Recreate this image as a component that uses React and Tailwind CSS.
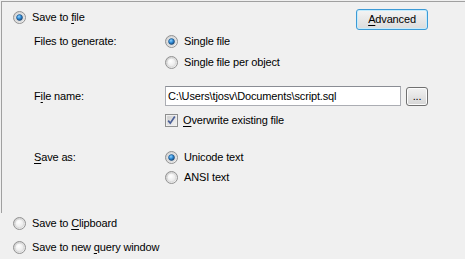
import React from "react";

function Radio({ checked }) {
  return (
    <svg width="13" height="13" viewBox="0 0 13 13" className="shrink-0 block">
      <defs>
        <linearGradient id="rOuter" x1="0" y1="0" x2="1" y2="1">
          <stop offset="0" stopColor="#c9c9c9" />
          <stop offset="1" stopColor="#f7f7f7" />
        </linearGradient>
        <radialGradient id="rInner" cx="0.4" cy="0.35" r="0.7">
          <stop offset="0" stopColor="#ffffff" />
          <stop offset="1" stopColor="#e6e6e6" />
        </radialGradient>
        <radialGradient id="rDot" cx="0.4" cy="0.35" r="0.7">
          <stop offset="0" stopColor="#8fd3ff" />
          <stop offset="0.5" stopColor="#2e8ad6" />
          <stop offset="1" stopColor="#163f6b" />
        </radialGradient>
      </defs>
      <circle cx="6.5" cy="6.5" r="6" fill="url(#rOuter)" stroke="#929292" strokeWidth="1" />
      <circle cx="6.5" cy="6.5" r="4.3" fill="url(#rInner)" stroke="#d8d8d8" strokeWidth="0.8" />
      {checked && <circle cx="6.5" cy="6.5" r="3" fill="url(#rDot)" stroke="#1c4a75" strokeWidth="0.6" />}
    </svg>
  );
}

function Checkbox() {
  return (
    <svg width="13" height="13" viewBox="0 0 13 13" className="shrink-0 block">
      <defs>
        <linearGradient id="cbIn" x1="0" y1="0" x2="1" y2="1">
          <stop offset="0" stopColor="#cbcbcb" />
          <stop offset="1" stopColor="#f6f6f6" />
        </linearGradient>
      </defs>
      <rect x="0.5" y="0.5" width="12" height="12" fill="#f4f4f4" stroke="#8e8f8f" />
      <rect x="2" y="2" width="9" height="9" fill="url(#cbIn)" stroke="#e2e2e2" strokeWidth="0.6" />
      <path d="M3.2 6.6 L5.3 9.2 L9.8 2.6" fill="none" stroke="#4a5f97" strokeWidth="1.7" />
    </svg>
  );
}

function U({ children }) {
  return <span className="underline underline-offset-[2px] decoration-[1px]">{children}</span>;
}

export default function App() {
  return (
    <div
      className="w-[465px] h-[259px] bg-[#f0f0f0] text-[11px] text-black overflow-hidden leading-none tracking-[-0.15px]"
      style={{ fontFamily: '"Liberation Sans", Arial, sans-serif' }}
    >
      <div className="ml-[1px] pt-[1px]">
        <div className="h-[212px] border-t border-l border-[#a0a0a0] flex flex-col">
          {/* Row 1 */}
          <div className="flex items-start pl-[11px] pr-[37px] pt-[7px]">
            <div className="flex items-center gap-[6px] mt-[2px] h-[13px]">
              <Radio checked />
              <span>
                Save to <U>f</U>ile
              </span>
            </div>
            <button className="ml-auto w-[72px] h-[21px] rounded-[3px] border border-[#3c9ad6] bg-gradient-to-b from-[#f4f4f4] to-[#dcdcdc] shadow-[inset_0_0_0_1px_#c4ecfd] flex items-center justify-center pb-[1px]">
              <U>A</U>dvanced
            </button>
          </div>

          {/* Files to generate */}
          <div className="flex items-center h-[20px] mt-[1px]">
            <div className="w-[163px] pl-[32px]">Files to generate:</div>
            <div className="flex items-center gap-[6px]">
              <Radio checked />
              <span>Single file</span>
            </div>
          </div>
          <div className="flex items-center h-[20px] mt-[1px]">
            <div className="w-[163px]" />
            <div className="flex items-center gap-[6px]">
              <Radio />
              <span>Single file per object</span>
            </div>
          </div>

          {/* File name */}
          <div className="flex items-center h-[20px] mt-[14px]">
            <div className="w-[163px] pl-[32px]">
              F<U>i</U>le name:
            </div>
            <div className="w-[236px] h-[20px] bg-white border border-[#abadb3] border-t-[#8a8d94] flex items-center pl-[2px]">
              C:\Users\tjosv\Documents\script.sql
            </div>
            <button className="ml-[5px] w-[22px] h-[19px] rounded-[3px] border border-[#707070] bg-gradient-to-b from-[#f2f2f2] to-[#d6d6d6] shadow-[inset_0_0_0_1px_#fcfcfc] flex items-end justify-center pb-[3px] leading-none">
              ...
            </button>
          </div>

          {/* Overwrite */}
          <div className="flex items-center h-[20px] mt-[4px]">
            <div className="w-[163px]" />
            <div className="flex items-center gap-[5px]">
              <Checkbox />
              <span>
                <U>O</U>verwrite existing file
              </span>
            </div>
          </div>

          {/* Save as */}
          <div className="flex items-center h-[20px] mt-[17px]">
            <div className="w-[163px] pl-[32px]">
              <U>S</U>ave as:
            </div>
            <div className="flex items-center gap-[6px]">
              <Radio checked />
              <span>Unicode text</span>
            </div>
          </div>
          <div className="flex items-center h-[20px]">
            <div className="w-[163px]" />
            <div className="flex items-center gap-[6px]">
              <Radio />
              <span>ANSI text</span>
            </div>
          </div>
        </div>
      </div>

      <div className="flex items-center h-[20px] pl-[13px]">
        <div className="flex items-center gap-[6px]">
          <Radio />
          <span>
            Save to <U>C</U>lipboard
          </span>
        </div>
      </div>
      <div className="flex items-center h-[20px] pl-[13px] mt-[4px]">
        <div className="flex items-center gap-[6px]">
          <Radio />
          <span>
            Save to new <U>q</U>uery window
          </span>
        </div>
      </div>
    </div>
  );
}
